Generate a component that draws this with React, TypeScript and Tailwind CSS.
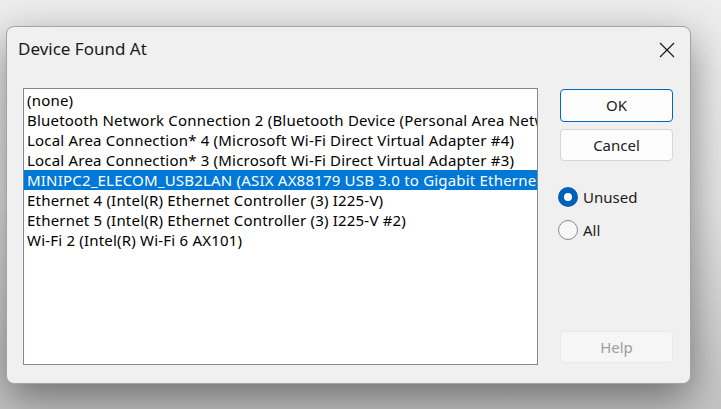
import { useState } from 'react'

const adapters = [
  '(none)',
  'Bluetooth Network Connection 2 (Bluetooth Device (Personal Area Network))',
  'Local Area Connection* 4 (Microsoft Wi-Fi Direct Virtual Adapter #4)',
  'Local Area Connection* 3 (Microsoft Wi-Fi Direct Virtual Adapter #3)',
  'MINIPC2_ELECOM_USB2LAN (ASIX AX88179 USB 3.0 to Gigabit Ethernet Adapter)',
  'Ethernet 4 (Intel(R) Ethernet Controller (3) I225-V)',
  'Ethernet 5 (Intel(R) Ethernet Controller (3) I225-V #2)',
  'Wi-Fi 2 (Intel(R) Wi-Fi 6 AX101)',
]

const Radio = ({ checked, label, onClick }: { checked: boolean; label: string; onClick: () => void }) => (
  <button onClick={onClick} className="flex items-center gap-[5px] -ml-[2px] h-[22px]">
    {checked ? (
      <span className="w-[20px] h-[20px] rounded-full bg-[#005fb8] flex items-center justify-center">
        <span className="w-[8px] h-[8px] rounded-full bg-white" />
      </span>
    ) : (
      <span className="w-[20px] h-[20px] rounded-full border border-[#8a8a8a] bg-[#f7f7f7]" />
    )}
    <span className="text-[15px] text-[#1b1b1b]">{label}</span>
  </button>
)

export default function App() {
  const [selected, setSelected] = useState(4)
  const [mode, setMode] = useState<'unused' | 'all'>('unused')

  return (
    <div
      className="w-[721px] h-[409px] overflow-hidden bg-gradient-to-b from-[#ededed] via-[#e4e4e4] to-[#c4c4c4] pt-[26px] pl-[6px]"
      style={{ fontFamily: '"Noto Sans", "Open Sans", sans-serif' }}
    >
      <div className="w-[685px] h-[358px] rounded-lg border border-[#a3a3a3] bg-[#f0f0f0] shadow-[0_14px_40px_rgba(0,0,0,0.45)] flex flex-col">
        {/* title bar */}
        <div className="h-[43px] flex items-center justify-between pl-[11px] pr-[15px] pt-[1px]">
          <span className="text-[17px] text-[#1a1a1a]">Device Found At</span>
          <svg width="16" height="16" viewBox="0 0 16 16" className="mt-[1px]">
            <path d="M1 1 L15 15 M15 1 L1 15" stroke="#1a1a1a" strokeWidth="1.2" fill="none" />
          </svg>
        </div>

        <div className="flex flex-1 gap-[22px] px-[16px] pt-[18px] pb-[18px]">
          {/* list */}
          <div className="w-[515px] border border-[#828790] bg-white py-[1px] overflow-hidden">
            {adapters.map((a, i) => (
              <div
                key={a}
                onClick={() => setSelected(i)}
                className={`h-[20px] leading-[20px] pl-[3px] whitespace-nowrap overflow-hidden text-[15px] tracking-[0.2px] ${
                  selected === i ? 'bg-[#0078d7] text-white' : 'text-black'
                }`}
              >
                {a}
              </div>
            ))}
          </div>

          {/* buttons */}
          <div className="w-[113px] flex flex-col">
            <button className="mt-[1px] h-[33px] rounded-[4px] border border-[#0067c0] bg-[#fdfdfd] text-[15px] text-[#1b1b1b]">
              OK
            </button>
            <button className="mt-[7px] h-[32px] rounded-[4px] border border-[#d5d5d5] bg-[#fdfdfd] text-[15px] text-[#1b1b1b]">
              Cancel
            </button>
            <div className="mt-[25px] flex flex-col gap-[11px]">
              <Radio checked={mode === 'unused'} label="Unused" onClick={() => setMode('unused')} />
              <Radio checked={mode === 'all'} label="All" onClick={() => setMode('all')} />
            </div>
            <button
              disabled
              className="mt-auto mb-[2px] h-[32px] rounded-[4px] border border-[#e9e9e9] bg-[#f6f6f6] text-[15px] text-[#9d9d9d]"
            >
              Help
            </button>
          </div>
        </div>
      </div>
    </div>
  )
}
